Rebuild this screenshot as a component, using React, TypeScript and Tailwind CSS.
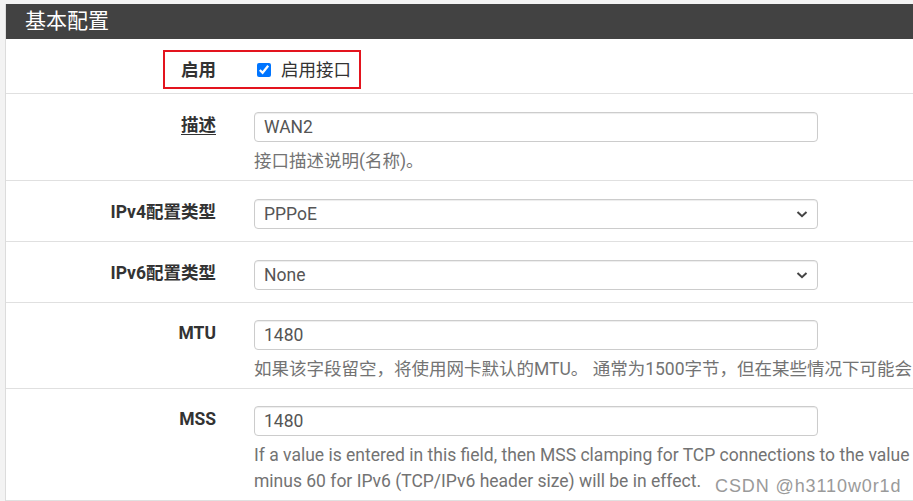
import React from 'react';

const Chevron = () => (
  <svg className="absolute right-[10px] top-[10px] pointer-events-none" width="12" height="10" viewBox="0 0 12 10">
    <path d="M1.5 3 L6 7.2 L10.5 3" fill="none" stroke="#444" strokeWidth="2" />
  </svg>
);

const inputCls =
  "h-[30px] w-[564px] border border-[#ccc] rounded-[4px] px-[9px] text-[17.5px] text-[#555] bg-white shadow-[inset_0_1px_1px_rgba(0,0,0,0.075)] outline-none";

const Row = ({ label, underline, children, help, tight }: { label: string; underline?: boolean; children: React.ReactNode; help?: React.ReactNode; tight?: boolean }) => (
  <div className={`flex border-b border-[#e0e0e0] ${tight ? 'pt-[18px]' : 'pt-[17px]'} ${help ? 'pb-[6px]' : 'pb-[12px]'}`}>
    <div className={`w-[210px] shrink-0 text-right font-bold text-[#333] leading-[26px] ${underline ? 'underline underline-offset-[3px]' : ''}`}>
      {label}
    </div>
    <div className="ml-[38px] shrink-0">
      {children}
      {help && <div className="mt-[6px] text-[#737373] leading-[26px] whitespace-nowrap">{help}</div>}
    </div>
  </div>
);

const App = () => {
  return (
    <div className="w-[913px] h-[501px] overflow-hidden bg-[#f3f3f3] pl-[5px] pt-[4px] font-[Roboto,'Noto_Sans_CJK_SC',sans-serif] text-[17.5px]">
      <div className="border-l border-b border-[#dcdcdc] bg-white">
        <div className="h-[35px] bg-[#424242] px-[19px] flex items-center text-white text-[21px]">基本配置</div>

        {/* 启用 */}
        <div className="relative flex items-center h-[55px] pt-[8px] border-b border-[#e0e0e0]">
          <div className="w-[210px] text-right font-bold text-[#333] leading-[26px]">启用</div>
          <div className="ml-[38px] flex items-center">
            <input type="checkbox" checked readOnly className="ml-[3px] w-[14px] h-[14px] m-0" />
            <span className="ml-[10px] text-[#333] leading-[26px]">启用接口</span>
          </div>
          <div className="absolute left-[157px] top-[11px] w-[198px] h-[39px] border-2 border-[#e3141e]" />
        </div>

        <Row label="描述" underline help="接口描述说明(名称)。" tight>
          <input className={inputCls} defaultValue="WAN2" />
        </Row>

        <Row label="IPv4配置类型" tight>
          <div className="relative">
            <select className={`${inputCls} appearance-none`} defaultValue="PPPoE">
              <option>PPPoE</option>
            </select>
            <Chevron />
          </div>
        </Row>

        <Row label="IPv6配置类型" tight>
          <div className="relative">
            <select className={`${inputCls} appearance-none`} defaultValue="None">
              <option>None</option>
            </select>
            <Chevron />
          </div>
        </Row>

        <Row label="MTU" help="如果该字段留空，将使用网卡默认的MTU。 通常为1500字节，但在某些情况下可能会">
          <input className={inputCls} defaultValue="1480" />
        </Row>

        <div className="relative">
          <Row
            label="MSS"
            help={
              <>
                If a value is entered in this field, then MSS clamping for TCP connections to the value
                <br />
                minus 60 for IPv6 (TCP/IPv6 header size) will be in effect.
              </>
            }
          >
            <input className={inputCls} defaultValue="1480" />
          </Row>
          <span className="absolute left-[709px] bottom-[1px] text-[#9a9a9a] text-[18px] font-['Liberation_Sans',sans-serif] tracking-[0.9px]">
            CSDN @h3110w0r1d
          </span>
        </div>
      </div>
    </div>
  );
};

export default App;
